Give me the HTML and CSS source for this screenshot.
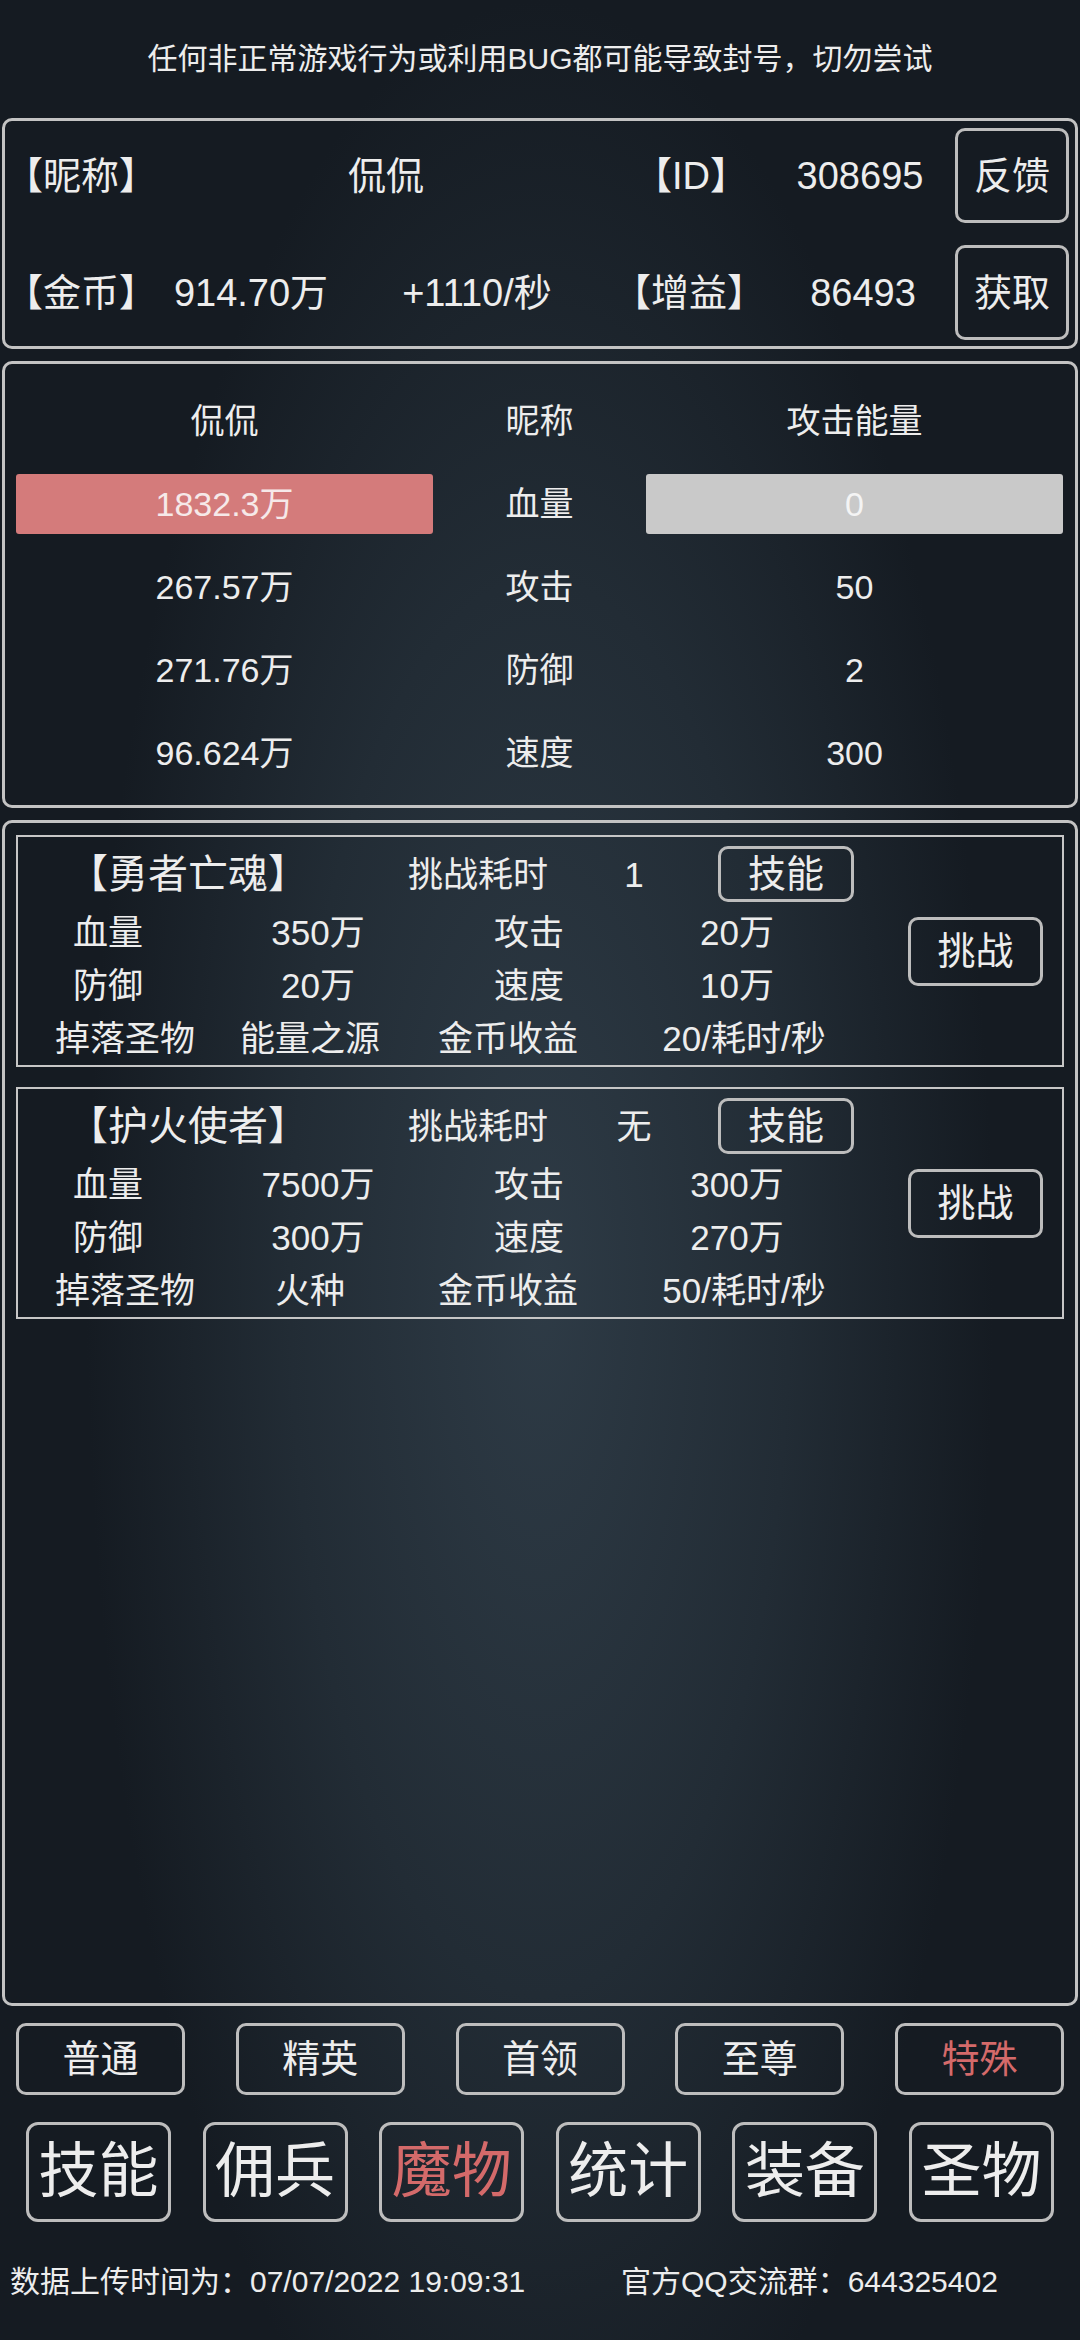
FILE: index.html
```html
<!DOCTYPE html>
<html lang="zh-CN">
<head>
    <meta charset="UTF-8">
    <meta name="viewport" content="width=device-width, initial-scale=1.0">
    <title>魔物</title>
    <link rel="stylesheet" href="styles.css">
</head>
<body>

<div class="notice">任何非正常游戏行为或利用BUG都可能导致封号，切勿尝试</div>

<div class="panel info">
    <div class="info-row row-a">
        <span>【昵称】</span>
        <span>侃侃</span>
        <span>【ID】</span>
        <span>308695</span>
        <button class="btn info-btn">反馈</button>
    </div>
    <div class="info-row row-b">
        <span>【金币】</span>
        <span>914.70万</span>
        <span>+1110/秒</span>
        <span>【增益】</span>
        <span>86493</span>
        <button class="btn info-btn">获取</button>
    </div>
</div>

<div class="panel compare">
    <div class="cell">侃侃</div>
    <div class="cell">昵称</div>
    <div class="cell">攻击能量</div>

    <div class="cell"><div class="bar bar-red">1832.3万</div></div>
    <div class="cell">血量</div>
    <div class="cell"><div class="bar bar-grey">0</div></div>

    <div class="cell">267.57万</div>
    <div class="cell">攻击</div>
    <div class="cell">50</div>

    <div class="cell">271.76万</div>
    <div class="cell">防御</div>
    <div class="cell">2</div>

    <div class="cell">96.624万</div>
    <div class="cell">速度</div>
    <div class="cell">300</div>
</div>

<div class="panel monsters">
    <div class="card">
        <div class="card-main">
            <div class="card-title">
                <span class="name">【勇者亡魂】</span>
                <span>挑战耗时</span>
                <span>1</span>
                <span><button class="btn skill-btn">技能</button></span>
            </div>
            <div class="stat-row">
                <span>血量</span><span>350万</span><span>攻击</span><span>20万</span>
            </div>
            <div class="stat-row">
                <span>防御</span><span>20万</span><span>速度</span><span>10万</span>
            </div>
            <div class="drop-row">
                <span>掉落圣物</span><span>能量之源</span><span>金币收益</span><span>20/耗时/秒</span>
            </div>
        </div>
        <div class="card-side">
            <button class="btn fight-btn">挑战</button>
        </div>
    </div>

    <div class="card">
        <div class="card-main">
            <div class="card-title">
                <span class="name">【护火使者】</span>
                <span>挑战耗时</span>
                <span>无</span>
                <span><button class="btn skill-btn">技能</button></span>
            </div>
            <div class="stat-row">
                <span>血量</span><span>7500万</span><span>攻击</span><span>300万</span>
            </div>
            <div class="stat-row">
                <span>防御</span><span>300万</span><span>速度</span><span>270万</span>
            </div>
            <div class="drop-row">
                <span>掉落圣物</span><span>火种</span><span>金币收益</span><span>50/耗时/秒</span>
            </div>
        </div>
        <div class="card-side">
            <button class="btn fight-btn">挑战</button>
        </div>
    </div>
</div>

<div class="tabs-small">
    <button class="btn tab-small">普通</button>
    <button class="btn tab-small">精英</button>
    <button class="btn tab-small">首领</button>
    <button class="btn tab-small">至尊</button>
    <button class="btn tab-small active">特殊</button>
</div>

<div class="tabs-big">
    <button class="btn tab-big">技能</button>
    <button class="btn tab-big">佣兵</button>
    <button class="btn tab-big active">魔物</button>
    <button class="btn tab-big">统计</button>
    <button class="btn tab-big">装备</button>
    <button class="btn tab-big">圣物</button>
</div>

<div class="footer">
    <span class="upload-time">数据上传时间为：07/07/2022 19:09:31</span>
    <span>官方QQ交流群：644325402</span>
</div>

</body>
</html>
```

FILE: styles.css
```css
html {
    background: #151b22;
}
body {
    margin: 0;
    height: 2340px;
    display: flex;
    flex-direction: column;
    font-family: "Liberation Sans", "Noto Sans CJK SC", sans-serif;
    line-height: 1;
    color: #ededed;
    background: radial-gradient(ellipse 42% 55% at 50% 55%, #2e3b46 0%, #222c35 55%, #151b22 100%);
    overflow: hidden;
}
.notice {
    height: 118px;
    display: flex;
    align-items: center;
    justify-content: center;
    font-size: 30px;
    flex-shrink: 0;
}
.panel {
    margin: 0 2px;
    border: 3px solid #c3c3c3;
    border-radius: 10px;
    flex-shrink: 0;
}
.btn {
    font-family: inherit;
    line-height: 1;
    color: #ededed;
    background: transparent;
    border: 3px solid #bdbdbd;
    border-radius: 10px;
    padding: 0;
    box-sizing: border-box;
}
.active {
    color: #d46a6a;
}

/* info */
.info {
    padding: 7px 6px 6px 0;
    height: 231px;
    box-sizing: border-box;
}
.info-row {
    display: grid;
    height: 95px;
    align-items: center;
    font-size: 38px;
    white-space: nowrap;
}
.info-row span {
    text-align: center;
}
.row-a {
    grid-template-columns: 150px 462px 148px 190px 114px;
    margin-bottom: 22px;
}
.row-b {
    grid-template-columns: 150px 192px 260px 164px 184px 114px;
}
.info-btn {
    width: 114px;
    height: 95px;
    font-size: 38px;
}

/* compare */
.compare {
    margin-top: 12px;
    height: 447px;
    box-sizing: border-box;
    padding: 15px 12px 11px 11px;
    display: grid;
    grid-template-columns: 417px 213px 417px;
    grid-auto-rows: 83px;
    font-size: 34px;
}
.cell {
    display: flex;
    align-items: center;
    justify-content: center;
}
.bar {
    width: 100%;
    height: 60px;
    display: flex;
    align-items: center;
    justify-content: center;
    border-radius: 3px;
}
.bar-red {
    background-color: #d47b7b;
    color: #f6e9e9;
}
.bar-grey {
    background-color: #c9c9c9;
    color: #f4f4f4;
}

/* monsters */
.monsters {
    margin-top: 12px;
    flex: 1;
    padding: 12px 11px;
}
.card {
    display: flex;
    align-items: center;
    border: 2px solid #c6c6c6;
    margin-bottom: 20px;
}
.card-main {
    width: 884px;
    padding-top: 9px;
    font-size: 35px;
}
.card-main span {
    text-align: center;
    white-space: nowrap;
}
.card-title {
    display: grid;
    grid-template-columns: 340px 240px 72px 232px;
    height: 56px;
    align-items: center;
    margin-bottom: 4px;
}
.card-title .name {
    font-size: 40px;
}
.stat-row,
.drop-row {
    display: grid;
    height: 53px;
    align-items: center;
}
.stat-row {
    grid-template-columns: 180px 240px 182px 234px;
}
.drop-row {
    grid-template-columns: 214px 156px 240px 232px;
}
.skill-btn {
    width: 136px;
    height: 56px;
    font-size: 38px;
    display: block;
    margin: 0 auto;
}
.card-side {
    width: 160px;
    padding-left: 6px;
    box-sizing: border-box;
}
.fight-btn {
    width: 135px;
    height: 69px;
    font-size: 38px;
}

/* tabs */
.tabs-small {
    display: flex;
    justify-content: space-between;
    padding: 0 16px;
    margin-top: 17px;
    flex-shrink: 0;
}
.tab-small {
    width: 169px;
    height: 72px;
    font-size: 38px;
}
.tabs-big {
    display: flex;
    justify-content: space-between;
    padding: 0 26px;
    margin-top: 27px;
    flex-shrink: 0;
}
.tab-big {
    width: 145px;
    height: 100px;
    font-size: 60px;
    border-radius: 12px;
}

/* footer */
.footer {
    display: flex;
    align-items: center;
    height: 40px;
    margin: 40px 0 38px;
    padding-left: 10px;
    font-size: 30px;
    white-space: nowrap;
    flex-shrink: 0;
}
.upload-time {
    width: 611px;
}
```
